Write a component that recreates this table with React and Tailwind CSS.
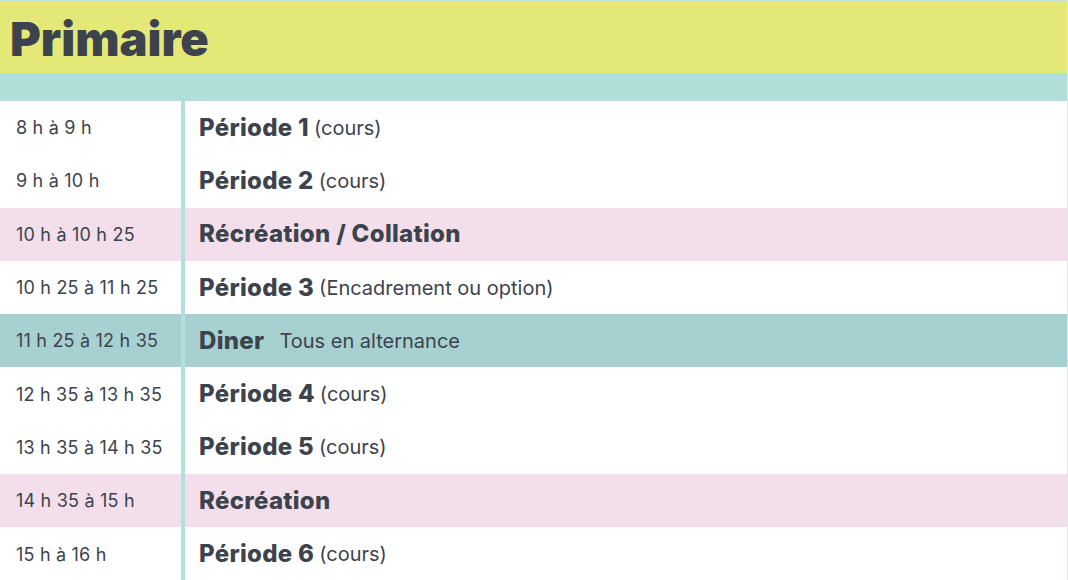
// Horaire primaire
const rows = [
  { time: '8 h à 9 h', title: 'Période 1', note: '(cours)' },
  { time: '9 h à 10 h', title: 'Période 2', note: '(cours)' },
  { time: '10 h à 10 h 25', title: 'Récréation / Collation', kind: 'pink' },
  { time: '10 h 25 à 11 h 25', title: 'Période 3', note: '(Encadrement ou option)' },
  { time: '11 h 25 à 12 h 35', title: 'Diner', note: 'Tous en alternance', kind: 'teal' },
  { time: '12 h 35 à 13 h 35', title: 'Période 4', note: '(cours)' },
  { time: '13 h 35 à 14 h 35', title: 'Période 5', note: '(cours)' },
  { time: '14 h 35 à 15 h', title: 'Récréation', kind: 'pink' },
  { time: '15 h à 16 h', title: 'Période 6', note: '(cours)' },
];

const bg = { pink: 'bg-[#f3dfeb]', teal: 'bg-[#a7d1d0]' };

export default function App() {
  return (
    <div className="w-[1068px] h-[580px] overflow-hidden bg-white text-[#3d434d] font-['Inter',sans-serif] border-r border-[#d6ece9]">
      <div className="h-[73px] bg-[#e3e877] border-t border-[#b8e2dc] flex items-center pl-[10px] pt-[2px]">
        <h1 className="text-[47px] font-black leading-none">Primaire</h1>
      </div>
      <div className="h-[28px] bg-[#b0dfd9]" />
      <div className="flex flex-col">
        {rows.map((r, i) => (
          <div key={i} className={`flex h-[53.3px] ${r.kind ? bg[r.kind] : 'bg-white'}`}>
            <div className="w-[181px] flex items-center pl-[16px] text-[18px] tracking-[0.2px]">{r.time}</div>
            <div className="w-[4px] bg-[#b3e0da]" />
            <div className="flex-1 flex items-center pl-[14px]">
              <span className="text-[24px] font-extrabold tracking-[0.3px]">{r.title}</span>
              {r.note && (
                <span className={`text-[20px] ${r.kind === 'teal' ? 'ml-[15px]' : 'ml-[5px]'}`}>{r.note}</span>
              )}
            </div>
          </div>
        ))}
      </div>
    </div>
  );
}
